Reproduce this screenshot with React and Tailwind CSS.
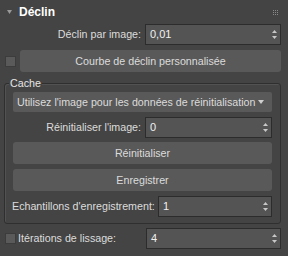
import React from "react";

const font = { fontFamily: '"Liberation Sans", Arial, sans-serif' };

function Spin() {
  return (
    <svg width="5" height="9" viewBox="0 0 5 9" className="shrink-0">
      <polygon points="2.5,0 5,3 0,3" fill="#c8c8c8" />
      <polygon points="0,6 5,6 2.5,9" fill="#c8c8c8" />
    </svg>
  );
}

function Spinner({ value, className }) {
  return (
    <div
      className={
        "flex items-center justify-between border border-[#2c2c2c] bg-[#545454] pl-[4px] pr-[3px] text-[11px] text-[#f0f0f0] " +
        className
      }
    >
      <span>{value}</span>
      <Spin />
    </div>
  );
}

function Btn({ children, className }) {
  return (
    <div
      className={
        "flex items-center justify-center rounded-[3px] bg-[#595959] text-[#dcdcdc] " +
        className
      }
    >
      {children}
    </div>
  );
}

function Check() {
  return <div className="h-[11px] w-[11px] shrink-0 border border-[#3c3c3c] bg-[#5a5a5a]" />;
}

export default function App() {
  return (
    <div
      className="relative h-[256px] w-[288px] overflow-hidden whitespace-nowrap bg-[#444444] text-[10.7px] text-[#dcdcdc]"
      style={font}
    >
      {/* header */}
      <div className="flex h-[24px] items-center pl-[7px] pr-[10px]">
        <svg width="5" height="4" viewBox="0 0 5 4" className="mr-[7px]">
          <polygon points="0,0 5,0 2.5,4" fill="#9a9a9a" />
        </svg>
        <span className="text-[12px] font-bold text-white">Déclin</span>
        <div className="ml-auto grid grid-cols-3 gap-[1px]">
          {Array.from({ length: 9 }).map((_, i) => (
            <div key={i} className="h-[1px] w-[1px] bg-[#8a8a8a]" />
          ))}
        </div>
      </div>

      {/* row 1 */}
      <div className="flex h-[21px] items-center pr-[7px]">
        <span className="w-[141px] text-right">Déclin par image:</span>
        <Spinner value="0,01" className="ml-[4px] h-[21px] flex-1" />
      </div>

      {/* row 2 */}
      <div className="mt-[5px] flex h-[22px] items-center pl-[5px] pr-[7px]">
        <Check />
        <Btn className="ml-[4px] h-[22px] flex-1">Courbe de déclin personnalisée</Btn>
      </div>

      {/* group */}
      <div className="relative ml-[4px] mr-[7px] mt-[11px] h-[141px] rounded-[3px] border border-[#2f2f2f] shadow-[inset_1px_1px_0_#525252] px-[8px] pt-[8px]">
        <span className="absolute left-[4px] top-[-8px] bg-[#444444] px-[1px] leading-[14px] text-[#e6e6e6]">
          Cache
        </span>
        <div className="flex h-[20px] items-center justify-between rounded-[2px] bg-[#595959] pl-[4px] pr-[8px] text-[#dcdcdc]">
          <span>Utilisez l'image pour les données de réinitialisation</span>
          <svg width="6" height="4" viewBox="0 0 6 4" className="shrink-0">
            <polygon points="0,0 6,0 3,4" fill="#cfcfcf" />
          </svg>
        </div>
        <div className="mt-[5px] flex h-[21px] items-center">
          <span className="w-[128px] text-right">Réinitialiser l'image:</span>
          <Spinner value="0" className="ml-[4px] h-[21px] flex-1" />
        </div>
        <Btn className="mt-[4px] h-[22px]">Réinitialiser</Btn>
        <Btn className="mt-[5px] h-[22px]">Enregistrer</Btn>
        <div className="mt-[5px] flex h-[21px] items-center">
          <span className="flex-1 -ml-[1px]">Echantillons d'enregistrement:</span>
          <Spinner value="1" className="h-[21px] w-[114px]" />
        </div>
      </div>

      {/* last row */}
      <div className="mt-[4px] flex h-[21px] items-center pl-[5px] pr-[7px]">
        <Check />
        <span className="ml-[2px] w-[128px]">Itérations de lissage:</span>
        <Spinner value="4" className="h-[21px] flex-1" />
      </div>
    </div>
  );
}
